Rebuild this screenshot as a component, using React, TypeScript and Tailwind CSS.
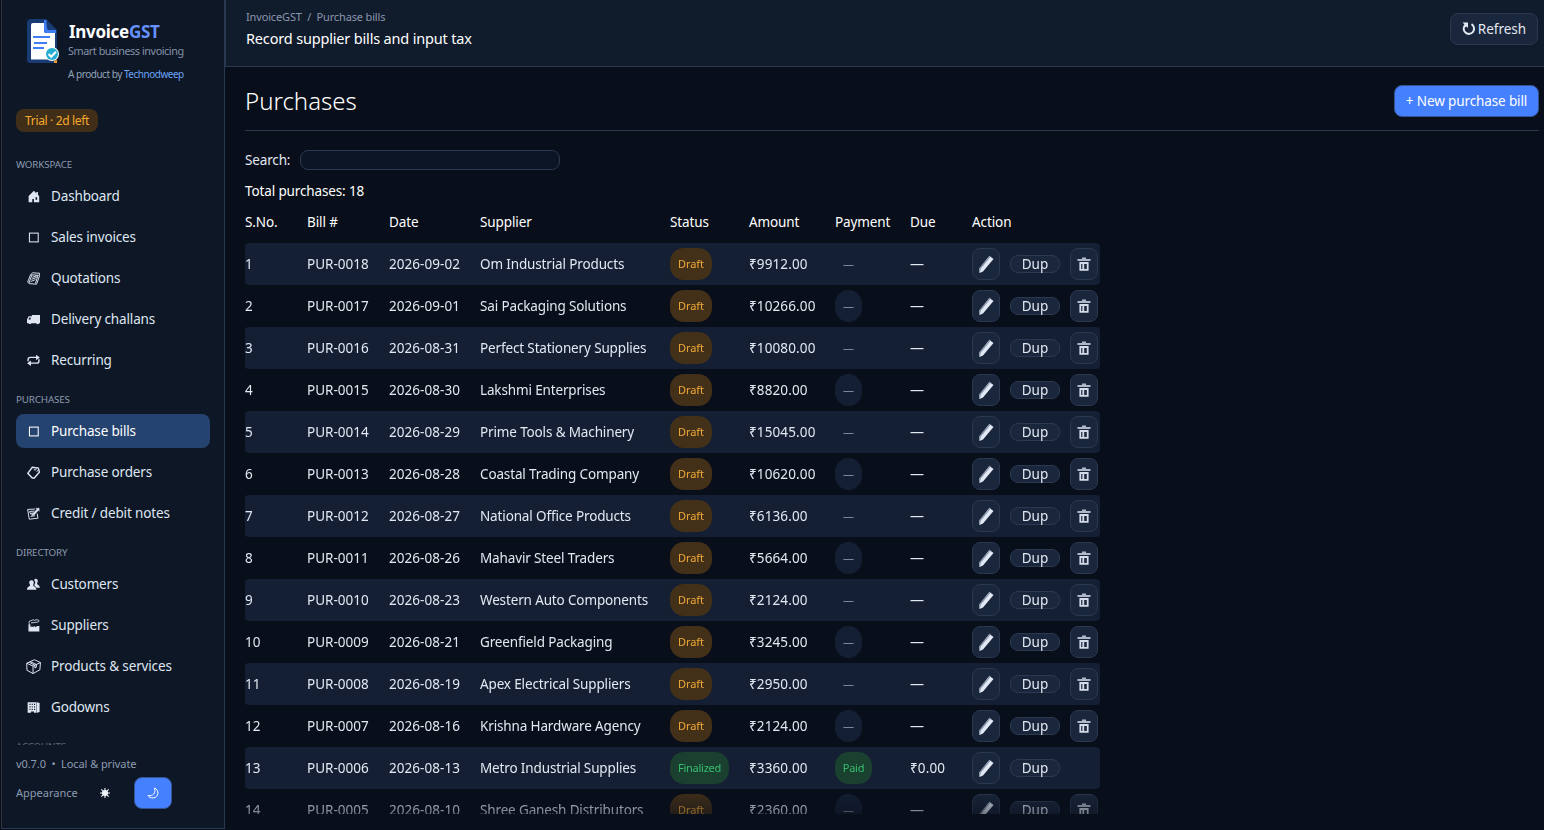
import type { ReactNode } from 'react';

const glyphs: Record<string, ReactNode> = {
  home: (
    <path fill="currentColor" fillRule="evenodd" d="M8.500 1 2 7.500V15h4.500v-4h2v4H15V7.500L13.500 6V2.500h-2v1.700zM10.500 9h2v3h-2z" />
  ),
  square: <rect x="3" y="2.600" width="10.800" height="10.800" fill="none" stroke="currentColor" strokeWidth="1.300" />,
  pages: (
    <g fill="none" stroke="currentColor" strokeWidth="1.200">
      <path d="M4.500 3 .8 12.500l2 1.800 9 .7L15.500 4.500V1.500L7 1z" />
      <path d="M5.500 3.500 14.500 4M6 3.500 2.500 13.500M6.500 6.500l6-2M5.500 9l6.500-2.500M4.500 11.800l6-2.500M13.500 4 10.500 14" />
    </g>
  ),
  truck: (
    <path fill="currentColor" fillRule="evenodd" d="M6 2.500h10v10h-1.200a1.800 1.800 0 0 1-3.400 0H5.300a1.700 1.700 0 0 1-3.200 0H0V8l2-4h4zM3 5.500 1.800 8H4.500V5.500z" />
  ),
  repeat: (
    <g fill="none" stroke="currentColor" strokeWidth="1.700">
      <path d="M1.300 9V7q0-2.800 2.800-2.800H13M14.700 6.500v2q0 2.800-2.800 2.800H3" />
      <path fill="currentColor" stroke="none" d="M11.200.8 15.800 4.200 11.200 7.600zM4.800 7.900.2 11.300l4.600 3.400z" />
    </g>
  ),
  tag: (
    <g fill="none" stroke="currentColor" strokeWidth="1.700">
      <path d="M6.500 1.500 14 2.500 15.200 7.500 9 14.800H6.500L1 9z" />
      <path strokeWidth="1.200" d="m8.500 4.500 2 .5 1-2M12 7 14 4.500" />
    </g>
  ),
  memo: (
    <g fill="none" stroke="currentColor" strokeWidth="1.200">
      <path d="M10 2.500.8 3l2 12 10.700-1.200L12.500 8" />
      <path d="M3 5.500 9 5M4 8l4-.800M4.500 11.500l5.500-.800M3 6l2.500 3.500" />
      <path strokeWidth="2.600" d="M14.800 1.500 7.500 9.500" />
      <path d="M6 11.500l1-3M11 1l4.500 4" />
    </g>
  ),
  people: (
    <g fill="currentColor">
      <path d="M10.500.8c2 0 3 1.400 2.700 3.200-.2 1.300-.7 2-.7 3 0 1.400 3.300 1.500 3.300 5h-4C11 10.500 9 10 9 9c0-.8 1.200-2 1.200-4 0-1.200-.8-1.800-1.500-2.300.3-1.200.9-1.900 1.800-1.900z" />
      <path d="M5.600 2.800c2 0 3 1.400 2.700 3.200C8.100 7.300 7.600 8 7.700 9.200c0 1.200 3.900 1.300 3.900 5.300H0c0-4 3.800-4 3.800-5.500 0-1-.8-1.700-1-3-.2-1.800.8-3.200 2.800-3.200z" />
    </g>
  ),
  factory: (
    <g>
      <path fill="currentColor" d="M1.800 6.500h2.400V10l2.500-1.500v1.800L10 8.500v1.800l3-1.800h2.200V15.500H1.800z" />
      <path fill="none" stroke="currentColor" strokeWidth="1.100" d="M3 6c-1.500-2.500 0-4 2-3.700C6 .8 8.500 1 9 1.600c2-1 5.800-.8 5.800.7S11.500 4.500 10 4C8.500 5 6.500 4.300 5 4.800" />
    </g>
  ),
  box: (
    <g fill="none" stroke="currentColor" strokeWidth="1.050">
      <path d="M.8 4.500 9 .8l6.400 3-.6 7.700-7.300 4L1 12z" />
      <path d="M.8 4.500 7.500 7.500l7.900-3.700M7.500 7.500v8M4.500 2.800l6.500 3v3l-1.500.8V6.700L3.500 3.500" />
    </g>
  ),
  building: (
    <g fill="currentColor">
      <path fillRule="evenodd" d="M.8 1.500h11V14.500H8.500V13H5v1.500H.8zM3 3.500V5h1.300V3.500zM5.800 3.500V5h1.300V3.500zM8.600 3.500V5h1.300V3.500zM3 6.500V8h1.300V6.500zM5.800 6.500V8h1.300V6.500zM8.600 6.500V8h1.300V6.500zM3 9.500V11h1.300V9.500zM5.800 9.500V11h1.300V9.500zM8.600 9.500V11h1.300V9.500z" />
      <path d="m12.300 1.500 3.200 1V13.500l-3.200 1z" />
    </g>
  ),
};

function Glyph({ name }: { name: string }) {
  return (
    <svg viewBox="0 0 16 16" className={name === 'box' ? '-mx-px h-[15px] w-[15px] shrink-0' : 'h-[13px] w-[13px] shrink-0'}>
      {glyphs[name]}
    </svg>
  );
}

const sections = [
  {
    title: 'WORKSPACE',
    items: [
      ['home', 'Dashboard'],
      ['square', 'Sales invoices'],
      ['pages', 'Quotations'],
      ['truck', 'Delivery challans'],
      ['repeat', 'Recurring'],
    ],
  },
  {
    title: 'PURCHASES',
    items: [
      ['square', 'Purchase bills'],
      ['tag', 'Purchase orders'],
      ['memo', 'Credit / debit notes'],
    ],
  },
  {
    title: 'DIRECTORY',
    items: [
      ['people', 'Customers'],
      ['factory', 'Suppliers'],
      ['box', 'Products & services'],
      ['building', 'Godowns'],
    ],
  },
  { title: 'ACCOUNTS', items: [] },
];

const bills = [
  ['PUR-0018', '2026-09-02', 'Om Industrial Products', '9912.00'],
  ['PUR-0017', '2026-09-01', 'Sai Packaging Solutions', '10266.00'],
  ['PUR-0016', '2026-08-31', 'Perfect Stationery Supplies', '10080.00'],
  ['PUR-0015', '2026-08-30', 'Lakshmi Enterprises', '8820.00'],
  ['PUR-0014', '2026-08-29', 'Prime Tools & Machinery', '15045.00'],
  ['PUR-0013', '2026-08-28', 'Coastal Trading Company', '10620.00'],
  ['PUR-0012', '2026-08-27', 'National Office Products', '6136.00'],
  ['PUR-0011', '2026-08-26', 'Mahavir Steel Traders', '5664.00'],
  ['PUR-0010', '2026-08-23', 'Western Auto Components', '2124.00'],
  ['PUR-0009', '2026-08-21', 'Greenfield Packaging', '3245.00'],
  ['PUR-0008', '2026-08-19', 'Apex Electrical Suppliers', '2950.00'],
  ['PUR-0007', '2026-08-16', 'Krishna Hardware Agency', '2124.00'],
  ['PUR-0006', '2026-08-13', 'Metro Industrial Supplies', '3360.00', 'paid'],
  ['PUR-0005', '2026-08-10', 'Shree Ganesh Distributors', '2360.00'],
];

const columns = 'grid w-[855px] grid-cols-[62px_82px_91px_190px_79px_86px_75px_62px_128px] items-center';

function Logo() {
  return (
    <svg viewBox="0 0 34 46" className="h-[46px] w-[34px] shrink-0">
      <path fill="#183b74" d="M4 0h15l11 11v30q0 3-3 3H3q-3 0-3-3V4q0-4 4-4z" />
      <path fill="#fff" d="M6 4h11v8q0 2 2 2h9v26H4V6q0-2 2-2z" />
      <path fill="#183b74" d="M20 2v8h8z" />
      <path fill="#3f7cf4" d="M17 1h2.500q0 9.500 1.500 10H29V14H20q-3 0-3-3z" />
      <path stroke="#3f7cf4" strokeWidth="2" d="M6 18h17M7 24h13M6 29h11" />
      <path stroke="#8a9cb8" d="M4 40.500h19" />
      <circle cx="25" cy="35" r="7" fill="#fff" />
      <circle cx="25" cy="35" r="6" fill="#25add2" />
      <path fill="none" stroke="#fff" strokeWidth="2" d="m21.500 35 2.700 2.700 4.800-5" />
      <path fill="#f29b2e" d="M27 42q1.500-1 3-1v3h-3z" />
    </svg>
  );
}

function Sidebar() {
  return (
    <aside className="flex h-[829px] w-[224px] shrink-0 flex-col border-x border-b border-[#2a3951] border-l-[#30343d] bg-[#0e1726] pl-[14px]">
      <div className="mt-[19px] flex h-[66px] pl-[11px]">
        <Logo />
        <div className="ml-[7px] whitespace-nowrap">
          <div className="mt-[3px] pl-px text-[17px] leading-5 font-bold tracking-[-0.300px] text-white">
            Invoice<span className="text-[#6691ff]">GST</span>
          </div>
          <div className="mt-px text-[10.800px] leading-4 tracking-[-0.430px] text-[#8492a9]">Smart business invoicing</div>
          <div className="mt-[7px] text-[10px] leading-4 tracking-[-0.480px] text-[#94a3b8]">
            A product by <span className="text-[#6ba3f5]">Technodweep</span>
          </div>
        </div>
      </div>
      <div className="mt-6 flex h-[23px] w-[82px] shrink-0 items-center justify-center rounded-lg bg-[#412e18] text-[12px] tracking-[-0.350px] text-[#f5ab2c]">
        Trial · 2d left
      </div>
      <nav className="mt-[17px] flex h-[596px] w-[194px] shrink-0 flex-col gap-[7px] overflow-hidden">
        {sections.map((section) => (
          <div key={section.title} className="flex shrink-0 flex-col gap-[7px]">
            <div
              className={
                section.title === 'ACCOUNTS'
                  ? 'h-[23px] pt-2 text-[9.800px] leading-4 tracking-[-0.150px] text-[#59667a]'
                  : 'h-[23px] pt-2 text-[9.800px] leading-4 tracking-[-0.150px] text-[#8c9bb0]'
              }
            >
              {section.title}
            </div>
            {section.items.map(([icon, label]) => (
              <div
                key={label}
                className={
                  label === 'Purchase bills'
                    ? 'flex h-[34px] items-center gap-[11px] rounded-lg bg-[#24436f] pl-[11px] text-white'
                    : 'flex h-[34px] items-center gap-[11px] rounded-lg pl-[11px] text-[#dfe6f1]'
                }
              >
                <Glyph name={icon} />
                <span className="tracking-[-0.150px] whitespace-nowrap">{label}</span>
              </div>
            ))}
          </div>
        ))}
      </nav>
      <div className="mt-[9px] text-[11px] leading-5 tracking-[-0.080px] text-[#8c9bb0]">v0.7.0 &nbsp;•&nbsp; Local &amp; private</div>
      <div className="mt-[3px] flex h-8 items-center text-[11px] text-[#8c9bb0]">
        <span className="w-[62px]">Appearance</span>
        <svg viewBox="0 0 12 12" className="ml-[21px] h-3 w-3 text-[#eef3fa]">
          <circle cx="6" cy="6" r="3" fill="currentColor" />
          <path stroke="currentColor" strokeWidth="1.100" d="M6 1v10M1 6h10M2.300 2.300l7.400 7.400M9.700 2.300 2.300 9.700" />
        </svg>
        <div className="ml-[23px] flex h-8 w-[38px] items-center justify-center rounded-lg border border-[#365590] bg-[#4580ff]">
          <svg viewBox="0 0 12 12" className="h-3 w-3">
            <path fill="none" stroke="#fff" strokeWidth="1" d="M7.500 1c5 2 4.500 9.500-1.500 10-2.500 0-4-1-5-2.500C6 9.500 9 6 7.500 1z" />
          </svg>
        </div>
      </div>
    </aside>
  );
}

function EditIcon() {
  return (
    <svg viewBox="0 0 18 20" className="h-5 w-[18px]">
      <path fill="#e2e9f5" d="M12.500 2 16.500 5 6 17.500 2.500 19l-.5-3.500z" />
      <path fill="#8d99ac" d="M2 18.500v-4L12.500 1.500l1 1.200L4 14.500l-1 3.500z" />
    </svg>
  );
}

function TrashIcon() {
  return (
    <svg viewBox="0 0 14 16" className="h-4 w-[14px]">
      <path fill="#adb7c7" d="M.5 3H5V1.500h4V3h4.500v2H.5z" />
      <path fill="none" stroke="#d3dbe8" strokeWidth="1.800" d="M3.300 7h7.400v6.800H3.300z" />
      <path stroke="#d3dbe8" strokeWidth="1.800" d="M6.300 8v5" />
    </svg>
  );
}

function Pill({ kind }: { kind: 'draft' | 'final' | 'paid' | 'none' }) {
  if (kind === 'draft')
    return <div className="flex h-8 w-[42px] items-center justify-center rounded-[14px] bg-[#433019] text-[11px] tracking-[-0.100px] text-[#f0a936]">Draft</div>;
  if (kind === 'final')
    return <div className="flex h-8 w-[59px] items-center justify-center rounded-[14px] bg-[#1a412f] text-[11px] tracking-[-0.250px] text-[#38bd70]">Finalized</div>;
  if (kind === 'paid')
    return <div className="flex h-8 w-[37px] items-center justify-center rounded-[14px] bg-[#1a412f] text-[11px] tracking-[-0.200px] text-[#38bd70]">Paid</div>;
  return (
    <div className="flex h-8 w-[27px] items-center justify-center rounded-[14px] bg-[#141f33] text-[11px] text-[#8997ac]">—</div>
  );
}

function BillRow({ bill, index }: { bill: string[]; index: number }) {
  const paid = bill[4] === 'paid';
  return (
    <div className={`${columns} h-[42px] shrink-0 whitespace-nowrap text-[#e2e8f2] ${index % 2 === 0 ? 'rounded-sm bg-[#141f33]' : ''}`}>
      <span>{index + 1}</span>
      <span>{bill[0]}</span>
      <span className="tracking-[0.050px]">{bill[1]}</span>
      <span className="tracking-[-0.140px]">{bill[2]}</span>
      <Pill kind={paid ? 'final' : 'draft'} />
      <span className="tracking-[0.120px]">₹{bill[3]}</span>
      <Pill kind={paid ? 'paid' : 'none'} />
      <span className={paid ? 'tracking-[0.120px]' : 'text-[14px]'}>{paid ? '₹0.00' : '—'}</span>
      <div className="flex items-center gap-[10px]">
        <div className="flex h-8 w-7 items-center justify-center rounded-lg border border-[#2a3850] bg-[#1a263b]">
          <EditIcon />
        </div>
        <div className="flex h-[18px] w-[50px] items-center justify-center rounded-lg border border-[#2a3850] bg-[#1a263b]">Dup</div>
        {!paid && (
          <div className="flex h-8 w-7 items-center justify-center rounded-lg border border-[#2a3850] bg-[#1a263b]">
            <TrashIcon />
          </div>
        )}
      </div>
    </div>
  );
}

export default function App() {
  return (
    <div className="flex h-[830px] w-[1544px] overflow-hidden bg-[#080e1a] pl-px font-['Noto_Sans',sans-serif] text-[13.500px] leading-[18px] text-[#e2e8f2]">
      <Sidebar />
      <div className="flex min-w-0 flex-1 flex-col">
        <header className="flex h-[67px] shrink-0 justify-between border-b border-l border-[#2a3951] bg-[#101b2c] pr-[6px] pl-5">
          <div>
            <div className="mt-[9px] text-[11px] leading-4 tracking-[-0.150px] text-[#8997ac]">InvoiceGST &nbsp;/&nbsp; Purchase bills</div>
            <div className="mt-[3px] text-[14.500px] leading-5 tracking-[-0.170px] text-white">Record supplier bills and input tax</div>
          </div>
          <button className="mt-[13px] flex h-8 w-[88px] items-center justify-center gap-[2px] rounded-lg border border-[#2a3850] bg-[#1a263b]">
            <svg viewBox="0 0 14 14" className="h-[14px] w-[14px]">
              <path fill="none" stroke="#e2e8f2" strokeWidth="2" d="M9.500 2.200a5.200 5.200 0 1 1-6.200.7" />
              <path fill="#e2e8f2" d="M.5.500h5.500v5.500L4.400 4.400 3 5.500 2.500 2.500z" />
            </svg>
            Refresh
          </button>
        </header>
        <main className="flex min-h-0 flex-1 flex-col pr-[5px] pl-5">
          <div className="flex h-16 shrink-0 items-start justify-between border-b border-[#2a3951]">
            <h1 className="mt-[18px] text-[24px] leading-8 font-light text-white">Purchases</h1>
            <button className="mt-[18px] flex h-8 w-[145px] items-center justify-center rounded-lg border border-[#365590] bg-[#4580ff] tracking-[-0.120px] whitespace-nowrap text-white">
              + New purchase bill
            </button>
          </div>
          <div className="mt-[19px] flex h-5 shrink-0 items-center">
            <span className="w-[55px] tracking-[-0.150px]">Search:</span>
            <input className="h-5 w-[260px] rounded-lg border border-[#2a3951] bg-[#0c1525] outline-none" />
          </div>
          <div className="mt-3 shrink-0 tracking-[-0.130px] text-white">Total purchases: 18</div>
          <div className={`${columns} mt-[13px] shrink-0 tracking-[-0.100px] whitespace-nowrap text-white`}>
            {['S.No.', 'Bill #', 'Date', 'Supplier', 'Status', 'Amount', 'Payment', 'Due', 'Action'].map((name) => (
              <span key={name}>{name}</span>
            ))}
          </div>
          <div className="mt-3 flex h-[571px] shrink-0 flex-col overflow-hidden [mask-image:linear-gradient(to_bottom,black_545px,rgba(0,0,0,0.500)_571px)]">
            {bills.map((bill, index) => (
              <BillRow key={bill[0]} bill={bill} index={index} />
            ))}
          </div>
        </main>
      </div>
    </div>
  );
}
